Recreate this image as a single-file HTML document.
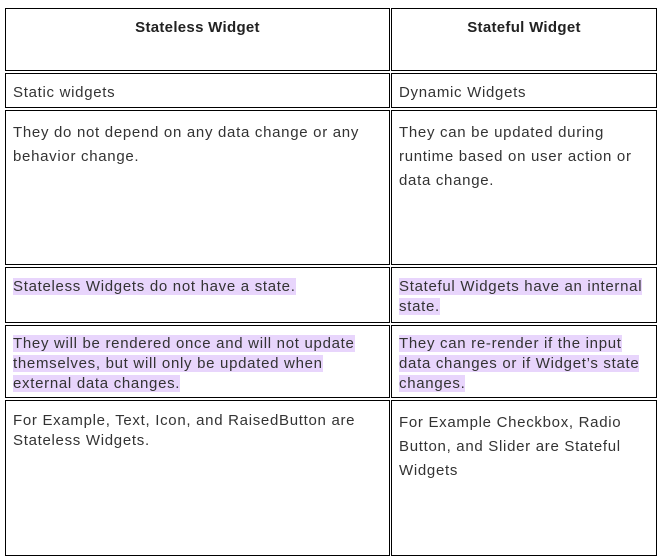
<!DOCTYPE html>
<html><head><meta charset="utf-8"><style>
body{margin:0;background:#fff;width:660px;height:558px;position:relative;font-family:"Liberation Sans",sans-serif;color:#333;font-size:15px;letter-spacing:0.7px}
.c{position:absolute;border:1px solid #000;box-sizing:border-box;padding:0 7px;white-space:nowrap}
.h{font-weight:bold;text-align:center;color:#222;padding-top:10px;letter-spacing:0.3px}
.m{background:#e8d5fc}
</style></head><body>
<div class="c h" style="left:5px;top:8px;width:385px;height:63px">Stateless Widget</div>
<div class="c h" style="left:391px;top:8px;width:266px;height:63px">Stateful Widget</div>

<div class="c" style="left:5px;top:73px;width:385px;height:35px;padding-top:10px">Static widgets</div>
<div class="c" style="left:391px;top:73px;width:266px;height:35px;padding-top:10px">Dynamic Widgets</div>

<div class="c" style="left:5px;top:110px;width:385px;height:155px;padding-top:10px;line-height:24px">They do not depend on any data change or any<br>behavior change.</div>
<div class="c" style="left:391px;top:110px;width:266px;height:155px;padding-top:10px;line-height:24px">They can be updated during<br>runtime based on user action or<br>data change.</div>

<div class="c" style="left:5px;top:267px;width:385px;height:56px;padding-top:9px;line-height:20px"><span class="m">Stateless Widgets do not have a state.</span></div>
<div class="c" style="left:391px;top:267px;width:266px;height:56px;padding-top:9px;line-height:20px"><span class="m">Stateful Widgets have an internal</span><br><span class="m">state.</span></div>

<div class="c" style="left:5px;top:325px;width:385px;height:73px;padding-top:8px;line-height:20px"><span class="m">They will be rendered once and will not update</span><br><span class="m">themselves, but will only be updated when</span><br><span class="m">external data changes.</span></div>
<div class="c" style="left:391px;top:325px;width:266px;height:73px;padding-top:8px;line-height:20px"><span class="m">They can re-render if the input</span><br><span class="m">data changes or if Widget’s state</span><br><span class="m">changes.</span></div>

<div class="c" style="left:5px;top:400px;width:385px;height:156px;padding-top:10px;line-height:20px">For Example, Text, Icon, and RaisedButton are<br>Stateless Widgets.</div>
<div class="c" style="left:391px;top:400px;width:266px;height:156px;padding-top:10px;line-height:24px">For Example Checkbox, Radio<br>Button, and Slider are Stateful<br>Widgets</div>
</body></html>
